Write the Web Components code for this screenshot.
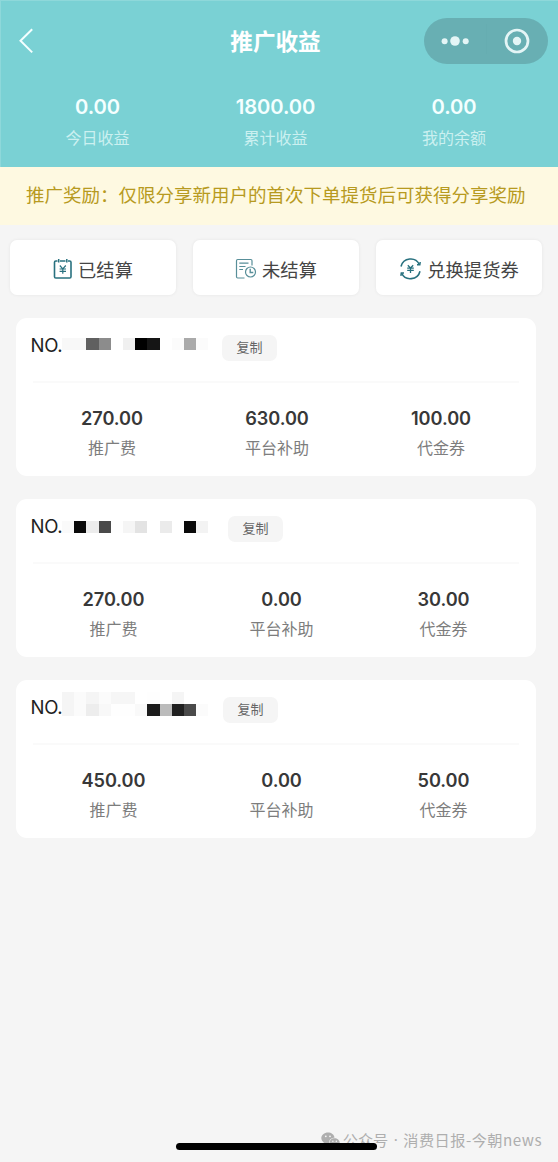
<!DOCTYPE html>
<html lang="zh-CN">
<head>
<meta charset="utf-8">
<title>推广收益</title>
<style>
html,body{margin:0;padding:0}
body{background:#f5f5f5;font-family:"Inter","Noto Sans CJK SC",sans-serif;width:558px;height:1162px;overflow:hidden}
</style>
</head>
<body>
<promo-page></promo-page>
<script>
const define = (name, html, setup) => {
  const template = document.createElement('template');
  template.innerHTML = html;
  customElements.define(name, class extends HTMLElement {
    constructor() {
      super();
      this.attachShadow({mode: 'open'}).append(template.content.cloneNode(true));
    }
    connectedCallback() { if (setup) setup(this, this.shadowRoot); }
  });
};

define('stat-item', `
<style>
:host{display:flex;flex-direction:column;align-items:center;white-space:nowrap}
.value{font-size:var(--value-size,18.2px);font-weight:600;line-height:24px;letter-spacing:-.07px;color:var(--value-color,#383838)}
.label{font-family:"Noto Sans CJK SC",sans-serif;font-size:16px;line-height:24px;margin-top:var(--label-gap,5px);color:var(--label-color,#7d7d7d)}
</style>
<div class="value"><slot name="value"></slot></div><div class="label"><slot></slot></div>`);

define('capsule-menu', `
<style>
:host{display:flex;width:124px;height:46px;border-radius:23px;background:#68afb3}
svg{display:block}
</style>
<svg width="124" height="46" viewBox="0 0 124 46">
<path d="M62.500 6V36" stroke="#66adb1" stroke-width="1"/>
<g fill="#e4f5f6"><circle cx="20.6" cy="23.3" r="3"/><circle cx="31" cy="23" r="4.8"/><circle cx="41.7" cy="23.3" r="3"/><circle cx="93" cy="23" r="4.2"/></g>
<circle cx="93" cy="23" r="11" fill="none" stroke="#e4f5f6" stroke-width="2.7"/>
</svg>`);

define('page-header', `
<style>
:host{display:block;height:167px;background:#7ad1d4;box-shadow:inset 1px 1px #8ed8da}
.bar{display:grid;grid-template-columns:134px 1fr 134px;align-items:center;height:46px;padding-top:18px}
.back{margin-left:18px;display:block}
h1{margin:0;padding-right:7px;text-align:center;color:#fff;font:700 22.6px/32px "Noto Sans CJK SC",sans-serif}
.stats{display:grid;grid-template-columns:195px 161px 196px;margin-top:31px;
--value-size:20.2px;--value-color:#f4ffff;--label-color:#cbf0f0;--label-gap:6px}
</style>
<div class="bar">
<svg class="back" width="18" height="30" viewBox="0 0 18 30"><path d="M14.2 3.2 2.500 14.8 14.2 26.4" fill="none" stroke="#f4ffff" stroke-width="2"/></svg>
<h1>推广收益</h1><capsule-menu></capsule-menu>
</div>
<div class="stats">
<stat-item><span slot="value">0.00</span>今日收益</stat-item>
<stat-item><span slot="value">1800.00</span>累计收益</stat-item>
<stat-item><span slot="value">0.00</span>我的余额</stat-item>
</div>`);

define('notice-bar', `
<style>
:host{display:flex;align-items:center;height:58px;box-sizing:border-box;padding:0 0 4px 26px;background:#fef9e1;color:#b79a20;
font:400 18.5px/28px "Noto Sans CJK SC",sans-serif;white-space:nowrap}
</style><slot></slot>`);

define('action-button', `
<style>
:host{display:flex;justify-content:center;align-items:center;height:55px;border-radius:7px;background:#fff;box-shadow:0 0 2px 1px #ededed;
color:#454545;font:400 18.3px/28px "Noto Sans CJK SC",sans-serif;white-space:nowrap}
::slotted(svg){display:block;flex:none;margin:2px 5px 0 0}
.text{padding-top:2px}
</style><slot name="icon"></slot><span class="text"><slot></slot></span>`);

define('pixel-mask', `
<style>:host{display:block}svg{display:block}</style><svg></svg>`, (host, root) => {
  const rows = host.getAttribute('cells').split('/').map(row => row.trim().split(' '));
  const svg = root.querySelector('svg');
  const w = 12.2, h = 12.2;
  svg.setAttribute('width', 147);
  svg.setAttribute('height', Math.ceil(rows.length * h));
  svg.setAttribute('shape-rendering', 'crispEdges');
  svg.innerHTML = rows.map((row, y) => row.map((c, x) =>
    `<rect x="${(x * w).toFixed(1)}" y="${(y * h).toFixed(1)}" width="${w}" height="${h}" fill="#${c}${c}${c}"/>`).join('')).join('');
});

define('order-card', `
<style>
:host{display:block;box-sizing:border-box;height:158px;padding:0 15px;border-radius:11px;background:#fff}
.head{display:flex;align-items:flex-start;height:63px}
.no{width:31.500px;margin-left:-.5px;padding-top:15px;font-size:18.6px;line-height:24px;letter-spacing:-.3px;color:#222;white-space:nowrap}
.mask{width:147px;padding-top:var(--mask-top,20px)}
.copy{margin:17px 0 0 var(--copy-gap,13px);width:55px;height:26px;border-radius:7px;background:#f5f5f5;color:#666;
text-align:center;font:400 13px/24px "Noto Sans CJK SC",sans-serif}
.line{height:2px;background:#fafafa;margin:0 2px}
.stats{display:grid;grid-template-columns:var(--cols,165px 171px 153px);padding-top:23px}
</style>
<div class="head"><span class="no">NO.</span><div class="mask"><slot name="mask"></slot></div><div class="copy">复制</div></div>
<div class="line"></div>
<div class="stats"><slot></slot></div>`);

define('home-footer', `
<style>
:host{display:block;position:relative;height:32px}
.mark{display:flex;align-items:center;justify-content:flex-end;height:20px;margin-top:-1px;padding-right:16px;color:#aeaeae;
font:400 15.2px/20px "Noto Sans CJK SC",sans-serif;white-space:nowrap}
.mark svg{margin:2px 3px 0 0}
.dot{font-family:"Noto Sans",sans-serif;width:15px;text-align:center}
.source{letter-spacing:.48px}
.home{position:absolute;left:176px;top:13px;width:201px;height:7px;border-radius:4px;background:#000}
</style>
<div class="mark">
<svg width="19" height="16" viewBox="0 0 19 16"><path fill="#aeaeae" d="M7 .5C3.3.5.3 3 .3 6.100 .3 7.900 1.300 9.400 2.800 10.400L2.200 12.500 4.500 11.300Q6 11.800 8 11.600 7.400 6.400 13.600 5.400C13 2.600 10.300.5 7 .5Z"/><path fill="#aeaeae" d="M13.500 6.200C10.600 6.200 8.500 8.200 8.500 10.500S10.600 14.800 13.500 14.800Q14.600 14.800 15.500 14.400L17.400 15.400 17 13.600C18 12.800 18.700 11.700 18.700 10.500 18.700 8.200 16.300 6.200 13.500 6.200Z"/><g fill="#f5f5f5"><circle cx="4.800" cy="4.300" r=".9"/><circle cx="9" cy="4.300" r=".9"/><circle cx="11.900" cy="9.300" r=".75"/><circle cx="15.300" cy="9.300" r=".75"/></g></svg>
<span>公众号</span><span class="dot">·</span><span class="source">消费日报-今朝news</span>
</div>
<div class="home"></div>`);

define('promo-page', `
<style>
:host{display:flex;flex-direction:column;width:558px;height:1162px;background:#f5f5f5}
.actions{display:grid;grid-template-columns:166px 166px 166px;column-gap:17px;padding:15px 0 0 10px}
.list{display:flex;flex-direction:column;gap:23px;padding:23px 22px 0 16px}
home-footer{margin-top:auto}
</style>
<page-header></page-header>
<notice-bar>推广奖励：仅限分享新用户的首次下单提货后可获得分享奖励</notice-bar>
<div class="actions">
<action-button><svg slot="icon" width="20" height="22" viewBox="0 0 20 22" fill="none" stroke="#28717f"><path d="M4.500 3H2.800Q1.500 3 1.500 4.300V18.700Q1.500 20 2.800 20H16.700Q18 20 18 18.700V4.300Q18 3 16.700 3H15M7 3H12.500" stroke-width="1.600"/><path d="M5.700 1V4.500M13.800 1V4.500" stroke-width="1.500"/><path d="M6.800 7.500 9.800 10.800 12.800 7.500M9.800 10.800V15.700M6.600 11H13M6.600 13.300H13" stroke-width="1.200"/></svg>已结算</action-button>
<action-button><svg slot="icon" width="22" height="22" viewBox="0 0 22 22" fill="none" stroke="#588f99" stroke-width="1.200"><path d="M9.500 20H2.700Q1.500 20 1.500 18.800V2.700Q1.500 1.500 2.700 1.500H15.800Q17 1.500 17 2.700V7.500M4.300 5.200H13.500M4.300 8.500H10.500M4.300 11.500H8"/><circle cx="15.500" cy="14" r="5"/><path d="M15.200 10.800V14.500H18.300" stroke-width="1.400"/></svg>未结算</action-button>
<action-button><svg slot="icon" width="23" height="22" viewBox="0 0 23 22" fill="none" stroke="#28717f"><path d="M2 8.500C4.200-.5 16.600-1.800 20.300 6.500M21 13.200C18.800 22.200 6.200 23.300 2.700 15.300" stroke-width="1.600"/><path d="M18 6.700H20.800L21.200 4M5 15.100H2.300L1.900 17.800" stroke-width="1.500"/><path d="M8.800 7.300 11.500 10 14.200 7.300M11.500 10V15M8.200 10.100H14.800M8.200 12.400H14.800" stroke-width="1.300"/></svg>兑换提货券</action-button>
</div>
<div class="list">
<order-card style="--cols:162px 168px 160px;--copy-gap:13px">
<pixel-mask slot="mask" cells="f8 f8 60 8c ff f0 00 15 ff fb aa fb"></pixel-mask>
<stat-item><span slot="value">270.00</span>推广费</stat-item><stat-item><span slot="value">630.00</span>平台补助</stat-item><stat-item><span slot="value">100.00</span>代金券</stat-item>
</order-card>
<order-card style="--mask-top:22px;--copy-gap:19px">
<pixel-mask slot="mask" cells="fa 0a ec 4a fe f5 e3 ff eb ff 0a f3"></pixel-mask>
<stat-item><span slot="value">270.00</span>推广费</stat-item><stat-item><span slot="value">0.00</span>平台补助</stat-item><stat-item><span slot="value">30.00</span>代金券</stat-item>
</order-card>
<order-card style="--mask-top:12px;--copy-gap:14px">
<pixel-mask slot="mask" cells="f5 fb f5 fb f6 f6 ff fe ff f5 ff ff/f5 fb ed f8 fe fe f9 1c bb 20 4a fb"></pixel-mask>
<stat-item><span slot="value">450.00</span>推广费</stat-item><stat-item><span slot="value">0.00</span>平台补助</stat-item><stat-item><span slot="value">50.00</span>代金券</stat-item>
</order-card>
</div>
<home-footer></home-footer>`);
</script>
</body>
</html>
